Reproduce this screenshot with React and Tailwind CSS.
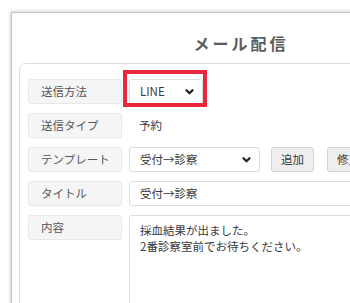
import React from "react";

const Chevron = () => (
  <svg width="9" height="6" viewBox="0 0 9 6" className="shrink-0">
    <path d="M1.5 1.2 L4.5 4.3 L7.5 1.2" fill="none" stroke="#222" strokeWidth="2.2" strokeLinecap="round" strokeLinejoin="round" />
  </svg>
);

const Label = ({ children }) => (
  <div className="w-[94px] h-[25px] shrink-0 rounded-[3px] border border-[#e8e8e8] bg-[#f5f5f5] pl-[12px] flex items-center text-[11.5px] text-[#555]">
    {children}
  </div>
);

export default function App() {
  return (
    <div
      className="w-[350px] h-[303px] overflow-hidden bg-white pt-[12px] pl-[11px]"
      style={{ fontFamily: '"Noto Sans CJK JP", "Noto Sans", sans-serif' }}
    >
      <div className="w-[460px] h-[320px] border border-[#c4c4c4] bg-white shadow-[0_0_4px_rgba(0,0,0,0.25)]">
        <div className="h-[50px] flex items-center justify-center pt-[10px]">
          <span className="text-[16px] font-bold tracking-[3px] text-[#5c5c5c]">メール配信</span>
        </div>
        <div className="ml-[7px] h-[300px] rounded-[6px] border border-[#dedede] pl-[8px] pt-[15px] flex flex-col gap-[9px] text-[11.5px] text-[#3a3a3a]">
          <div className="flex items-center gap-[7px]">
            <Label>送信方法</Label>
            <div className="relative">
              <div className="w-[74px] h-[25px] rounded-[3px] border border-[#ddd] bg-white pl-[10px] pr-[8px] flex items-center justify-between">
                <span>LINE</span>
                <Chevron />
              </div>
              <div className="absolute -left-[6px] -top-[9px] w-[84px] h-[37px] border-[4px] border-[#e8283c]"></div>
            </div>
          </div>
          <div className="flex items-center gap-[7px]">
            <Label>送信タイプ</Label>
            <span className="pl-[10px]">予約</span>
          </div>
          <div className="flex items-center gap-[7px]">
            <Label>テンプレート</Label>
            <div className="w-[131px] h-[25px] rounded-[3px] border border-[#ddd] bg-white pl-[10px] pr-[8px] flex items-center justify-between">
              <span>受付→診察</span>
              <Chevron />
            </div>
            <div className="ml-[4px] w-[43px] h-[25px] shrink-0 rounded-[3px] border border-[#d2d2d2] bg-[#eee] flex items-center justify-center">追加</div>
            <div className="ml-[6px] w-[43px] h-[25px] shrink-0 rounded-[3px] border border-[#d2d2d2] bg-[#eee] flex items-center justify-center">修正</div>
          </div>
          <div className="flex items-center gap-[7px]">
            <Label>タイトル</Label>
            <div className="w-[300px] h-[25px] rounded-[3px] border border-[#ddd] bg-white pl-[10px] flex items-center">受付→診察</div>
          </div>
          <div className="flex items-start gap-[7px]">
            <Label>内容</Label>
            <div className="w-[300px] h-[120px] rounded-[3px] border border-[#ddd] bg-white pl-[10px] pt-[6px] leading-[16px]">
              <div>採血結果が出ました。</div>
              <div>2番診察室前でお待ちください。</div>
            </div>
          </div>
        </div>
      </div>
    </div>
  );
}
